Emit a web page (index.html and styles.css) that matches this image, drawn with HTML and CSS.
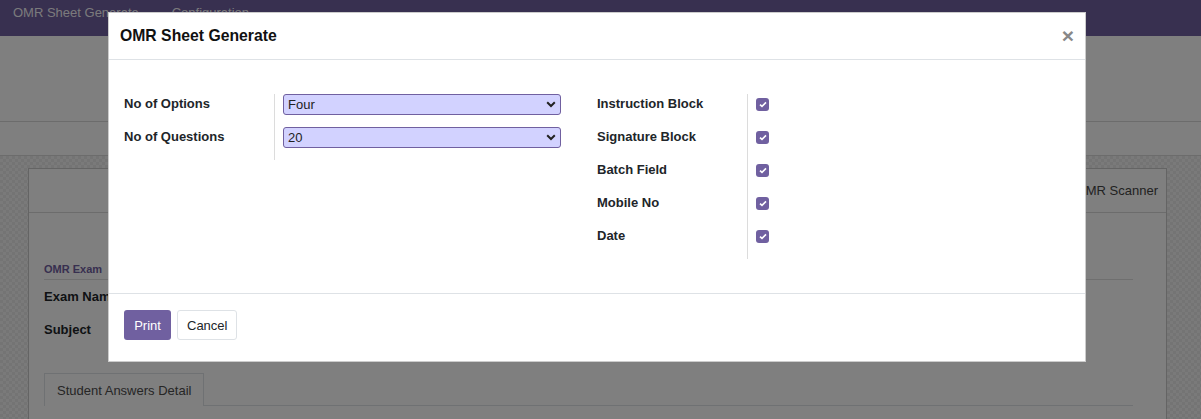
FILE: index.html
```html
<!DOCTYPE html>
<html>
<head>
<meta charset="utf-8">
<link rel="stylesheet" href="styles.css">
</head>
<body>
<div class="app">
  <nav class="navbar">
    <span class="nav-item">OMR Sheet Generate</span>
    <span class="nav-item">Configuration</span>
  </nav>
  <div class="cp-top"></div>
  <div class="cp-bottom"></div>
  <div class="content">
    <div class="sheet">
      <div class="sheet-head">
        <div class="smart-btn">OMR Scanner</div>
      </div>
      <div class="sheet-body">
        <div class="sep-title">OMR Exam</div>
        <div class="bg-row"><span class="bg-label">Exam Name</span></div>
        <div class="bg-row"><span class="bg-label">Subject</span></div>
        <div class="tabs">
          <div class="tab">Student Answers Detail</div>
        </div>
      </div>
    </div>
  </div>
</div>

<div class="backdrop">
  <div class="modal">
    <div class="modal-header">
      <h4 class="modal-title">OMR Sheet Generate</h4>
      <span class="close">&times;</span>
    </div>
    <div class="modal-body">
      <div class="group left-group">
        <div class="labels">
          <div class="f-label">No of Options</div>
          <div class="f-label">No of Questions</div>
        </div>
        <div class="fields">
          <div class="f-field">
            <div class="select"><span>Four</span>
              <svg class="chev" width="10" height="7" viewBox="0 0 10 7"><path d="M1.2 1.3 L5 5 L8.8 1.3" fill="none" stroke="#222" stroke-width="2"/></svg>
            </div>
          </div>
          <div class="f-field">
            <div class="select"><span>20</span>
              <svg class="chev" width="10" height="7" viewBox="0 0 10 7"><path d="M1.2 1.3 L5 5 L8.8 1.3" fill="none" stroke="#222" stroke-width="2"/></svg>
            </div>
          </div>
        </div>
      </div>
      <div class="group right-group">
        <div class="labels">
          <div class="f-label">Instruction Block</div>
          <div class="f-label">Signature Block</div>
          <div class="f-label">Batch Field</div>
          <div class="f-label">Mobile No</div>
          <div class="f-label">Date</div>
        </div>
        <div class="fields">
          <div class="f-field"><span class="cb"><svg width="8" height="7" viewBox="0 0 8 7"><path d="M1 3.6 L3 5.4 L7 1.4" fill="none" stroke="#fff" stroke-width="1.6"/></svg></span></div>
          <div class="f-field"><span class="cb"><svg width="8" height="7" viewBox="0 0 8 7"><path d="M1 3.6 L3 5.4 L7 1.4" fill="none" stroke="#fff" stroke-width="1.6"/></svg></span></div>
          <div class="f-field"><span class="cb"><svg width="8" height="7" viewBox="0 0 8 7"><path d="M1 3.6 L3 5.4 L7 1.4" fill="none" stroke="#fff" stroke-width="1.6"/></svg></span></div>
          <div class="f-field"><span class="cb"><svg width="8" height="7" viewBox="0 0 8 7"><path d="M1 3.6 L3 5.4 L7 1.4" fill="none" stroke="#fff" stroke-width="1.6"/></svg></span></div>
          <div class="f-field"><span class="cb"><svg width="8" height="7" viewBox="0 0 8 7"><path d="M1 3.6 L3 5.4 L7 1.4" fill="none" stroke="#fff" stroke-width="1.6"/></svg></span></div>
        </div>
      </div>
    </div>
    <div class="modal-footer">
      <button class="btn btn-primary">Print</button>
      <button class="btn btn-secondary">Cancel</button>
    </div>
  </div>
</div>
</body>
</html>
```

FILE: styles.css
```css
* { box-sizing: border-box; }
html, body { margin: 0; padding: 0; }
body {
  width: 1201px;
  height: 419px;
  overflow: hidden;
  font-family: "Liberation Sans", Arial, sans-serif;
  font-size: 13px;
  color: #212529;
  position: relative;
  background: #fff;
}
.app { width: 1201px; height: 419px; overflow: hidden; }
.navbar {
  height: 36px;
  background: #7060a0;
  display: flex;
  align-items: flex-start;
  padding: 5px 0 0 13px;
  gap: 33px;
}
.nav-item { color: rgba(255,255,255,0.95); font-size: 13px; }
.cp-top { height: 86px; background: #fff; border-bottom: 1px solid #d8d8d8; }
.cp-bottom { height: 34px; background: #fff; border-bottom: 1px solid #d8d8d8; }
.content {
  height: 264px;
  background-color: #f0f0f0;
  background-image: repeating-conic-gradient(#f4f4f4 0 25%, #e8e8e8 0 50%);
  background-size: 6px 6px;
  padding: 12px 34px 0 28px;
}
.sheet {
  background: #fff;
  border: 1px solid #c9c9c9;
  height: 300px;
}
.sheet-head {
  height: 44px;
  border-bottom: 1px solid #d8d8d8;
  display: flex;
  justify-content: flex-end;
  align-items: center;
}
.smart-btn { font-size: 13px; color: #444; padding-right: 8px; }
.sheet-body { padding: 50px 33px 0 15px; }
.sep-title {
  color: #7060a0;
  font-weight: bold;
  font-size: 11px;
  padding-bottom: 4px;
  border-bottom: 1px solid #dedede;
  margin-bottom: 9px;
}
.bg-row { height: 32px; }
.bg-row + .bg-row { padding-top: 1px; }
.bg-label { font-weight: bold; font-size: 13px; }
.tabs {
  margin-top: 20px;
  border-bottom: 1px solid #dee2e6;
  display: flex;
}
.tab {
  border: 1px solid #dee2e6;
  border-bottom: none;
  padding: 9px 12px 8px 12px;
  color: #4c4c4c;
  font-size: 13px;
  margin-bottom: -1px;
  background: #fff;
}

.backdrop {
  position: absolute;
  left: 0; top: 0;
  width: 1201px; height: 419px;
  background: rgba(0,0,0,0.5);
  padding: 12px 0 0 108px;
}
.modal {
  width: 978px;
  height: 350px;
  background: #fff;
  border: 1px solid rgba(0,0,0,0.2);
  display: flex;
  flex-direction: column;
}
.modal-header {
  height: 47px;
  border-bottom: 1px solid #dee2e6;
  display: flex;
  align-items: center;
  justify-content: space-between;
  padding: 0 11px 0 11px;
}
.modal-title {
  margin: 0;
  font-size: 15.75px;
  font-weight: bold;
  color: #111;
}
.close {
  font-size: 21px;
  font-weight: bold;
  color: #888;
  line-height: 1;
  margin-top: -2px;
}
.modal-body {
  flex: 1;
  display: flex;
  align-items: flex-start;
  padding: 34px 15px 0 15px;
}
.group { display: flex; align-items: flex-start; }
.left-group { width: 473px; }
.right-group { width: 400px; }
.labels { display: flex; flex-direction: column; padding-right: 10px; }
.left-group .labels { width: 150px; }
.right-group .labels { width: 150px; }
.fields {
  border-left: 1px solid #dcdcdc;
  padding-left: 8px;
  display: flex;
  flex-direction: column;
}
.left-group .fields { width: 288px; }
.f-label {
  height: 33px;
  font-weight: bold;
  font-size: 13px;
  color: #212529;
  line-height: 20px;
}
.f-field { height: 33px; display: flex; align-items: flex-start; }
.select {
  width: 278px;
  height: 21px;
  background: #d2d2ff;
  border: 1px solid #7060a0;
  border-radius: 3px;
  display: flex;
  align-items: center;
  justify-content: space-between;
  padding: 0 4px 0 4px;
  font-size: 13px;
  color: #222;
}
.cb {
  margin-top: 4px;
  width: 13px;
  height: 13px;
  border-radius: 3px;
  background: #7060a0;
  display: flex;
  align-items: center;
  justify-content: center;
}
.modal-footer {
  height: 68px;
  border-top: 1px solid #dee2e6;
  display: flex;
  align-items: flex-start;
  padding: 16px 15px 0 15px;
  gap: 6px;
}
.btn {
  font-family: "Liberation Sans", Arial, sans-serif;
  font-size: 13px;
  height: 30px;
  padding: 0 9px;
  border-radius: 3px;
  border: 1px solid transparent;
}
.btn-primary { background: #7060a0; color: #fff; width: 47px; }
.btn-secondary { background: #fff; color: #212529; border-color: #dee2e6; width: 60px; }
```
